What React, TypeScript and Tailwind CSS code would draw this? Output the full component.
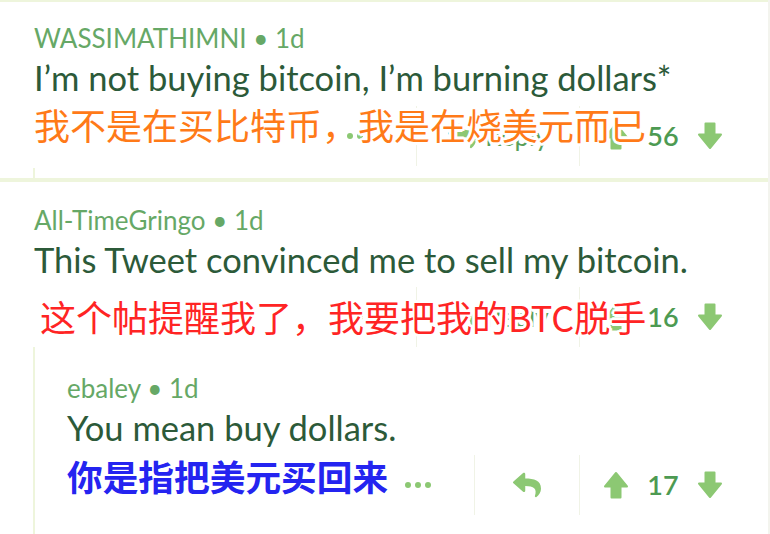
import type { ReactNode } from "react";

const latin = "font-['Lato','Liberation_Sans',sans-serif]";
const cjk = "font-['Noto_Sans_CJK_SC','Noto_Sans',sans-serif]";
const halo =
  "[text-shadow:3px_0_0_#fff,-3px_0_0_#fff,0_3px_0_#fff,0_-3px_0_#fff,2px_2px_0_#fff,-2px_-2px_0_#fff,2px_-2px_0_#fff,-2px_2px_0_#fff]";

function ArrowDown({ up = false }: { up?: boolean }) {
  return (
    <svg
      width="26"
      height="28"
      viewBox="0 0 26 28"
      className={up ? "rotate-180" : ""}
    >
      <path
        d="M8.5 1.5h9v11h6.5L13 26 2 12.5h6.5z"
        fill="#8cc873"
        stroke="#8cc873"
        strokeWidth="2"
        strokeLinejoin="round"
      />
    </svg>
  );
}

function ReplyIcon() {
  return (
    <svg width="30" height="28" viewBox="0 0 512 512" fill="#8cc873">
      <path d="M8.3 189.8L184.3 37.9C199.7 24.5 224 35.3 224 56v80.1c160.6 1.8 288 34 288 186.3 0 61.4-39.6 122.3-83.3 154.1-13.7 9.9-33.1-2.5-28.1-18.6 45.3-145-21.5-183.5-176.6-185.7V360c0 20.7-24.3 31.5-39.7 18.2l-176-152c-11.1-9.6-11.1-26.8 0-36.4z" />
    </svg>
  );
}

function Divider() {
  return <div className="h-[60px] w-px bg-[#f0f3e6]" />;
}

function Actions({
  count,
  replyWidth,
  withLabel,
  overlay,
  className = "",
}: {
  count: string;
  replyWidth: string;
  withLabel: boolean;
  overlay: ReactNode;
  className?: string;
}) {
  return (
    <div className={`relative flex h-[60px] items-center justify-end ${className}`}>
      <div className="flex items-center gap-[4px] pr-[43px]">
        <span className="h-[6px] w-[6px] rounded-full bg-[#8cc873]" />
        <span className="h-[6px] w-[6px] rounded-full bg-[#8cc873]" />
        <span className="h-[6px] w-[6px] rounded-full bg-[#8cc873]" />
      </div>
      <Divider />
      <div className={`flex items-center justify-center gap-2 ${replyWidth}`}>
        <ReplyIcon />
        {withLabel && (
          <span className={`${latin} text-[26px] text-[#5aa05a]`}>Reply</span>
        )}
      </div>
      <Divider />
      <div className="flex items-center pl-[23px] pr-[45px]">
        <ArrowDown up />
        <span
          className={`${latin} w-[68px] text-center text-[27px] font-semibold text-[#4d9a52]`}
        >
          {count}
        </span>
        <ArrowDown />
      </div>
      {overlay}
    </div>
  );
}

function Header({ name }: { name: string }) {
  return (
    <div className={`${latin} h-[34px] text-[26px] leading-[34px] text-[#66a866]`}>
      {name} • 1d
    </div>
  );
}

function Body({ text }: { text: string }) {
  return (
    <div className={`${latin} h-[46px] text-[34.5px] leading-[46px] text-[#2c5a39]`}>
      {text}
    </div>
  );
}

export default function App() {
  return (
    <div className="min-h-[534px] w-[770px] overflow-hidden border-r-2 border-[#f3f4ee] bg-white">
      <div className="h-[2px] bg-[#eef5dc]" />

      {/* first comment */}
      <div className="pl-[34px] pt-[19px]">
        <Header name="WASSIMATHIMNI" />
        <Body text="I’m not buying bitcoin, I’m burning dollars*" />
        <Actions
          className="mt-[5px]"
          count="56"
          replyWidth="w-[162px]"
          withLabel
          overlay={
            <div
              className={`${cjk} ${halo} absolute left-0 top-[-4px] text-[36px] leading-[44px] text-[#ff7a18]`}
            >
              我不是在买比特币，我是在烧美元而已
            </div>
          }
        />
        <div className="ml-[-1px] mt-[2px] h-[10px] w-[2px] bg-[#eef5dc]" />
      </div>

      <div className="h-[4px] bg-[#eef5dc]" />

      {/* second comment */}
      <div className="pl-[34px] pt-[21px]">
        <Header name="All-TimeGringo" />
        <Body text="This Tweet convinced me to sell my bitcoin." />
        <Actions
          className="mt-[4px]"
          count="16"
          replyWidth="w-[162px]"
          withLabel
          overlay={
            <div
              className={`${cjk} ${halo} absolute left-[6px] top-[7px] text-[36px] leading-[44px] text-[#ff2424]`}
            >
              这个帖提醒我了，我要把我的BTC脱手
            </div>
          }
        />
      </div>

      {/* nested reply */}
      <div className="ml-[33px] border-l-2 border-[#eef5dc] pb-[19px] pl-[32px] pt-[24px]">
        <Header name="ebaley" />
        <Body text="You mean buy dollars." />
        <Actions
          className="mt-[4px]"
          count="17"
          replyWidth="w-[104px]"
          withLabel={false}
          overlay={
            <div
              className={`${cjk} ${halo} absolute left-0 top-[-1px] text-[35.7px] font-bold leading-[44px] text-[#2424f0]`}
            >
              你是指把美元买回来
            </div>
          }
        />
      </div>
    </div>
  );
}
